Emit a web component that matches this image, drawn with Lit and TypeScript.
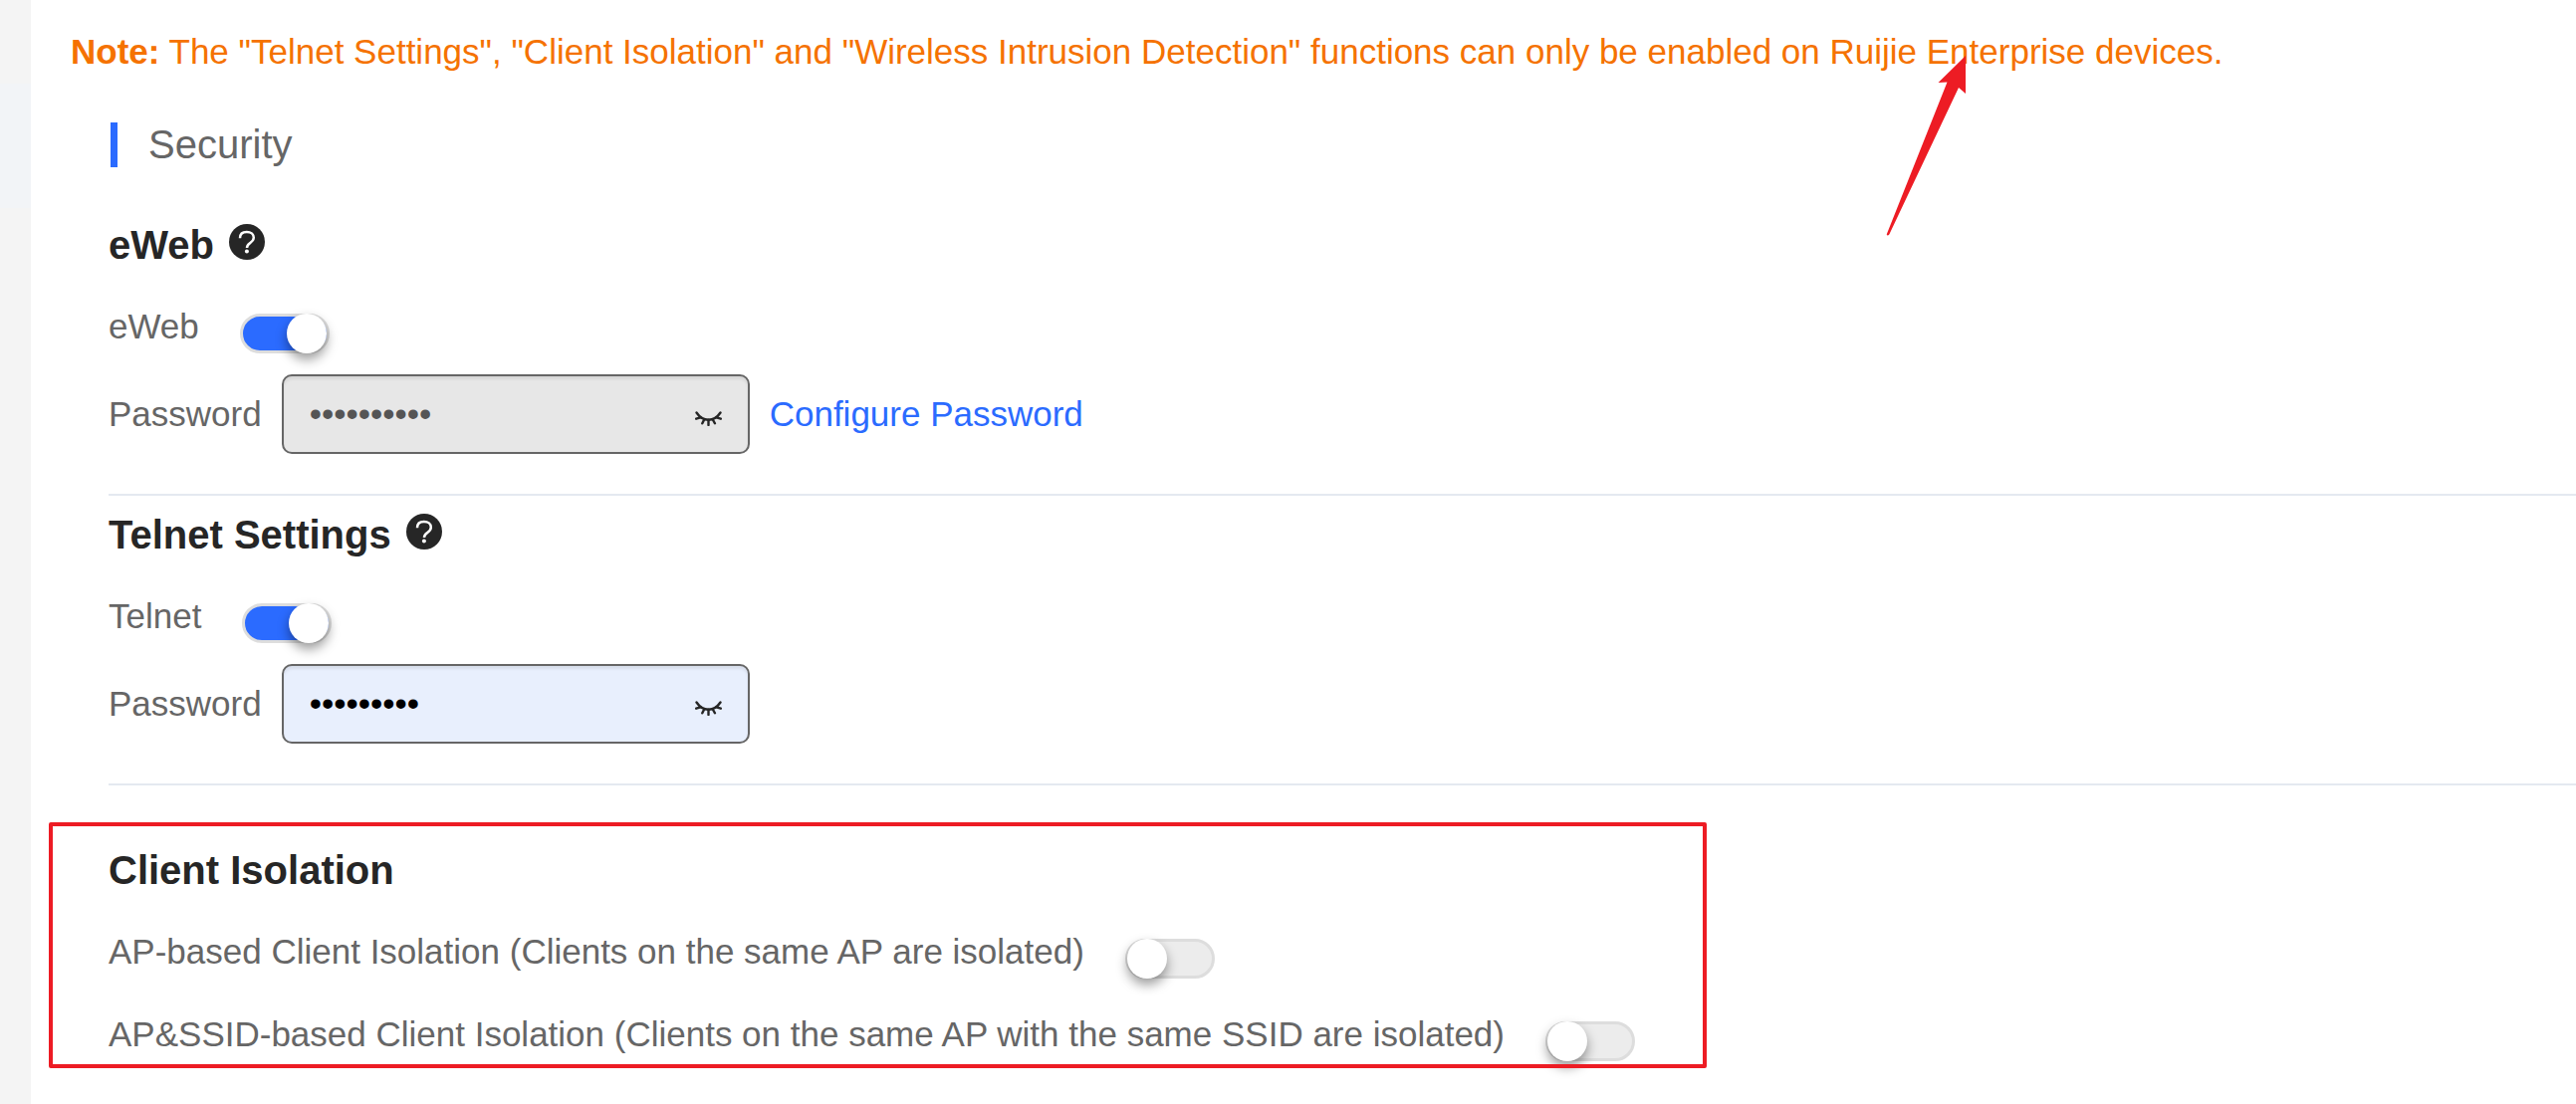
import { LitElement, html, css, svg } from "lit";
import { customElement, property } from "lit/decorators.js";

@customElement("help-icon")
class HelpIcon extends LitElement {
  @property() label = "Help";

  static styles = css`
    :host {
      display: block;
    }
    .help {
      display: block;
      width: 36px;
      height: 36px;
      padding: 0;
      border: 0;
      background: none;
      cursor: pointer;
    }
    .glyph {
      display: block;
      width: 100%;
      height: 100%;
    }
  `;

  render() {
    return html`<button class="help" type="button" aria-label=${this.label}>
      <svg class="glyph" viewBox="0 0 36 36" aria-hidden="true">
        <circle cx="18" cy="18" r="18" fill="#262626" />
        <path
          d="M11 14.200C11 10.200 13.600 8 17.800 8c4 0 7 2.200 7 5.700 0 2.600-1.500 3.900-3.500 5.300-2.200 1.500-3.300 2.500-3.300 5"
          fill="none"
          stroke="#fff"
          stroke-width="2.5"
        />
        <circle cx="17.900" cy="27.500" r="2" fill="#fff" />
      </svg>
    </button>`;
  }
}

@customElement("switch-row")
class SwitchRow extends LitElement {
  @property() label = "";
  @property({ type: Boolean }) on = false;

  static styles = css`
    :host {
      display: block;
    }
    .row {
      display: flex;
      align-items: flex-start;
      gap: 41px;
    }
    .text {
      font-size: 35px;
      line-height: 40px;
      color: #666;
    }
    .switch {
      appearance: none;
      flex: none;
      box-sizing: border-box;
      width: 90px;
      height: 40px;
      margin: 7px 0 0;
      border: 3px solid #ddd;
      border-radius: 20px;
      background: #ececec;
      cursor: pointer;
    }
    .switch::before {
      content: "";
      display: block;
      width: 40px;
      height: 40px;
      margin: -3px 0 0 -1px;
      border-radius: 50%;
      background: #fff;
      box-shadow: 0 6px 12px rgba(0, 0, 0, 0.4);
    }
    .switch:checked {
      background: #2b6bff;
    }
    .switch:checked::before {
      margin-left: 44px;
    }
  `;

  render() {
    return html`<div class="row">
      <label class="text" for="switch">${this.label}</label>
      <input class="switch" id="switch" type="checkbox" role="switch" .checked=${this.on} />
    </div>`;
  }
}

const closedEye = svg`
  <path d="M1.500 1.500C4.500 6 8.500 8.700 13.500 8.700S22.500 6 25.500 1.500" />
  <path d="M5.500 6.300L1.200 7.700M9.300 8.200L7.300 12.300M13.500 8.700V14M17.700 8.200L19.900 12.300M21.500 6.300L25.800 7.700" />
`;

@customElement("password-row")
class PasswordRow extends LitElement {
  @property() value = "";
  @property() action = "";
  @property({ type: Boolean }) locked = false;

  static styles = css`
    :host {
      display: block;
    }
    .row {
      display: flex;
      align-items: center;
      gap: 20px;
      font-size: 35px;
      line-height: 40px;
      color: #666;
    }
    .field {
      box-sizing: border-box;
      display: flex;
      align-items: center;
      width: 470px;
      height: 80px;
      padding: 0 26px;
      border: 2px solid #666;
      border-radius: 10px;
      background: #e8effd;
      box-shadow: inset 0 3px 3px rgba(0, 0, 0, 0.075);
      color: #000;
    }
    .field.locked {
      background: #e7e7e7;
      color: #555;
    }
    .entry {
      flex: 1;
      min-width: 0;
      padding: 0;
      border: 0;
      outline: 0;
      background: none;
      color: inherit;
      font: inherit;
    }
    .reveal {
      flex: none;
      width: 27px;
      height: 15px;
      margin-top: 8px;
      padding: 0;
      border: 0;
      background: none;
      cursor: pointer;
    }
    .eye {
      display: block;
      fill: none;
      stroke: #262626;
      stroke-width: 2.4;
      stroke-linecap: round;
    }
    .link {
      color: #2b6bff;
      text-decoration: none;
    }
  `;

  render() {
    return html`<div class="row">
      <label for="entry">Password</label>
      <div class="field ${this.locked ? "locked" : ""}">
        <input
          class="entry"
          id="entry"
          type="password"
          autocomplete="off"
          ?readonly=${this.locked}
          .value=${this.value}
        />
        <button class="reveal" type="button" aria-label="Show password">
          <svg class="eye" width="27" height="15" viewBox="0 0 27 15" aria-hidden="true">${closedEye}</svg>
        </button>
      </div>
      ${this.action ? html`<a class="link" href="#password">${this.action}</a>` : ""}
    </div>`;
  }
}

@customElement("app-root")
class AppRoot extends LitElement {
  static styles = css`
    :host {
      display: block;
      font-family: "Liberation Sans", Arial, sans-serif;
    }
    .page {
      position: relative;
      display: flex;
      min-height: 100vh;
      overflow: hidden;
      background: #fff;
    }
    .rail {
      flex: none;
      width: 31px;
      padding-top: 84px;
      box-sizing: border-box;
      background: #f4f4f4;
    }
    .current {
      height: 125px;
      background: #f2f4f7;
    }
    .content {
      flex: 1;
      min-width: 0;
      padding-top: 27px;
    }
    .note {
      margin: 0 0 46px 40px;
      font-size: 35px;
      line-height: 50px;
      color: #f57200;
    }
    .body {
      margin-left: 78px;
    }
    .title {
      margin: 0 0 53px 2px;
      padding-left: 31px;
      border-left: 7px solid #2b6bff;
      font-size: 40px;
      font-weight: 400;
      line-height: 45px;
      color: #666;
    }
    .group {
      padding-bottom: 40px;
      margin-bottom: 14px;
      border-bottom: 2px solid #e4e9f0;
    }
    .group.wide {
      margin-bottom: 60px;
    }
    .heading {
      display: flex;
      align-items: flex-start;
      gap: 15px;
      margin-bottom: 37px;
    }
    .name {
      margin: 0;
      font-size: 40px;
      line-height: 50px;
      color: #262626;
    }
    .help {
      margin-top: 4px;
    }
    .password {
      margin-top: 21px;
    }
    .next {
      margin-top: 36px;
    }
    .frame {
      position: absolute;
      left: 49px;
      top: 826px;
      box-sizing: border-box;
      width: 1665px;
      height: 247px;
      border: 4px solid #ed1c24;
      border-radius: 2px;
      pointer-events: none;
    }
    .arrow {
      position: absolute;
      left: 1890px;
      top: 50px;
      pointer-events: none;
    }
  `;

  render() {
    return html`<div class="page">
      <aside class="rail"><div class="current"></div></aside>
      <main class="content">
        <p class="note">
          <strong>Note:</strong> The "Telnet Settings", "Client Isolation" and "Wireless Intrusion
          Detection" functions can only be enabled on Ruijie Enterprise devices.
        </p>
        <div class="body">
          <h1 class="title">Security</h1>
          <section class="group">
            <div class="heading">
              <h2 class="name">eWeb</h2>
              <help-icon class="help" label="About eWeb"></help-icon>
            </div>
            <switch-row label="eWeb" on></switch-row>
            <password-row
              class="password"
              value="abcdefghij"
              action="Configure Password"
              locked
            ></password-row>
          </section>
          <section class="group wide">
            <div class="heading">
              <h2 class="name">Telnet Settings</h2>
              <help-icon class="help" label="About Telnet Settings"></help-icon>
            </div>
            <switch-row label="Telnet" on></switch-row>
            <password-row class="password" value="abcdefghi"></password-row>
          </section>
          <section>
            <div class="heading">
              <h2 class="name">Client Isolation</h2>
            </div>
            <switch-row
              label="AP-based Client Isolation (Clients on the same AP are isolated)"
            ></switch-row>
            <switch-row
              class="next"
              label="AP&amp;SSID-based Client Isolation (Clients on the same AP with the same SSID are isolated)"
            ></switch-row>
          </section>
        </div>
      </main>
      <div class="frame"></div>
      <svg class="arrow" width="90" height="190" viewBox="0 0 90 190" aria-hidden="true">
        <path
          d="M84 6L56.500 33L65.500 32.500L4.700 185.500Q5.500 187.500 7.300 185.500L77 38L84 44Z"
          fill="#ed1c24"
        />
      </svg>
    </div>`;
  }
}
